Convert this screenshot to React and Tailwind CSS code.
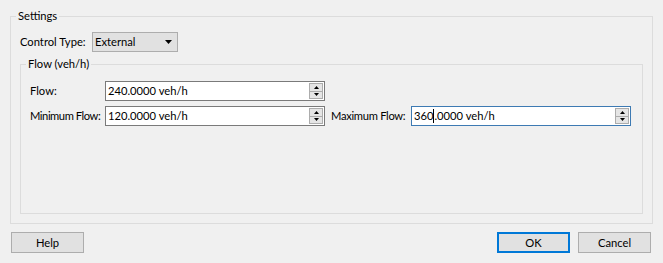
import { useState } from 'react';

const font = "font-['Segoe_UI','Lato',sans-serif] text-[11.2px] leading-[16px] text-black whitespace-nowrap";

const SpinBox = ({ value, caret, focused }) => (
  <div
    className={`flex items-center shrink-0 w-[220px] h-[20px] bg-white border ${
      focused ? 'border-[#3d7ab3]' : 'border-[#7a7a7a]'
    } pl-[2px] pr-[1px]`}
  >
    <div className="flex-1 flex items-center">
      {caret ? (
        <>
          <span>{value.slice(0, 3)}</span>
          <span className="w-px h-[14px] bg-black" />
          <span>{value.slice(3)}</span>
        </>
      ) : (
        <span>{value}</span>
      )}
    </div>
    <div className="flex flex-col w-[14px] h-[16px]">
      <div className="flex-1 flex items-center justify-center bg-[#e5e5e5] border border-[#acacac]">
        <svg width="5" height="3" viewBox="0 0 5 3">
          <path d="M2.5 0L5 3H0z" fill="#000" />
        </svg>
      </div>
      <div className="flex-1 flex items-center justify-center bg-[#e5e5e5] border border-t-0 border-[#acacac]">
        <svg width="5" height="3" viewBox="0 0 5 3">
          <path d="M0 0h5L2.5 3z" fill="#000" />
        </svg>
      </div>
    </div>
  </div>
);

const Button = ({ children, primary }) => (
  <button
    className={`w-[73px] h-[21px] flex items-center justify-center bg-[#e1e1e1] ${
      primary ? 'border-2 border-[#0078d7]' : 'border border-[#adadad]'
    }`}
  >
    {children}
  </button>
);

export default function App() {
  const [controlType] = useState('External');

  return (
    <div className={`w-[663px] h-[263px] bg-[#f0f0f0] pt-[8px] overflow-hidden ${font}`}>
      {/* Settings group */}
      <fieldset className="mx-[10px] h-[216px] border border-[#dcdcdc] px-[9px]">
        <legend className="ml-[-4px] px-[2px]">Settings</legend>

        <div className="flex items-center mt-[8px] h-[20px]">
          <span className="w-[72px] shrink-0">Control Type:</span>
          <div className="flex items-center justify-between w-[86px] h-[20px] bg-[#e1e1e1] border border-[#adadad] pl-[2px] pr-[5px]">
            <span>{controlType}</span>
            <svg width="7" height="4" viewBox="0 0 7 4">
              <path d="M0 0h7L3.5 4z" fill="#000" />
            </svg>
          </div>
        </div>

        {/* Flow group */}
        <fieldset className="mt-[4px] h-[158px] border border-[#dcdcdc] px-[9px]">
          <legend className="ml-[-4px] px-[2px]">Flow (veh/h)</legend>

          <div className="flex flex-col gap-[5px] mt-[9px]">
            <div className="flex items-center">
              <span className="w-[75px] shrink-0">Flow:</span>
              <SpinBox value="240.0000 veh/h" />
            </div>
            <div className="flex items-center">
              <span className="w-[75px] shrink-0 tracking-[-0.45px]">Minimum Flow:</span>
              <SpinBox value="120.0000 veh/h" />
              <span className="w-[80px] shrink-0 ml-[6px] tracking-[-0.3px]">Maximum Flow:</span>
              <SpinBox value="360.0000 veh/h" caret focused />
            </div>
          </div>
        </fieldset>
      </fieldset>

      <div className="flex items-center mt-[8px] pl-[11px] pr-[12px]">
        <Button>Help</Button>
        <div className="flex-1" />
        <Button primary>OK</Button>
        <div className="w-[8px]" />
        <Button>Cancel</Button>
      </div>
    </div>
  );
}
